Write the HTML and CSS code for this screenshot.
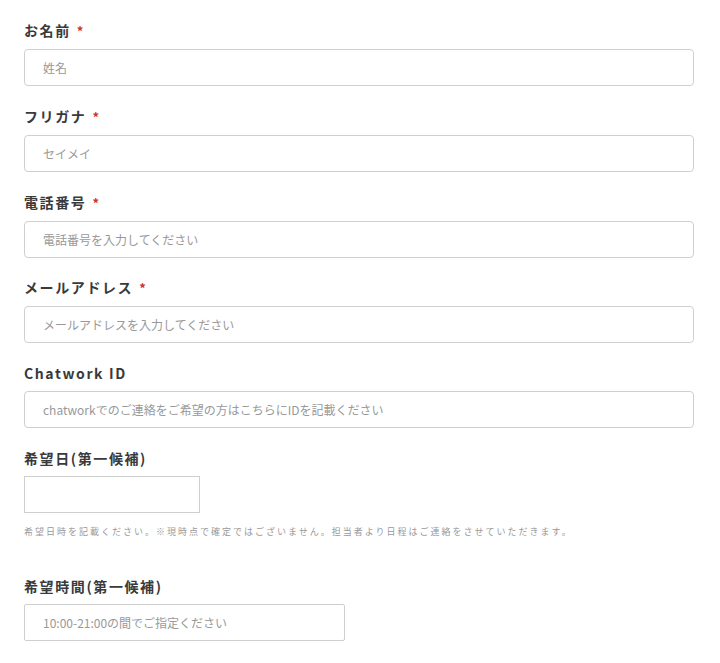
FILE: index.html
```html
<!DOCTYPE html>
<html lang="ja">
  <head>
    <meta charset="UTF-8" />
    <meta name="viewport" content="width=device-width, initial-scale=1.0" />
    <title>お問い合わせ</title>
    <link rel="stylesheet" href="styles.css">
  </head>
  <body>
    <form class="contact-form">
      <div class="field">
        <label for="name">お名前<span class="req">*</span></label>
        <input type="text" id="name" placeholder="姓名" />
      </div>
      <div class="field">
        <label for="kana">フリガナ<span class="req">*</span></label>
        <input type="text" id="kana" placeholder="セイメイ" />
      </div>
      <div class="field">
        <label for="tel">電話番号<span class="req">*</span></label>
        <input type="text" id="tel" placeholder="電話番号を入力してください" />
      </div>
      <div class="field">
        <label for="mail">メールアドレス<span class="req">*</span></label>
        <input type="text" id="mail" placeholder="メールアドレスを入力してください" />
      </div>
      <div class="field">
        <label for="chatwork">Chatwork ID</label>
        <input type="text" id="chatwork" placeholder="chatworkでのご連絡をご希望の方はこちらにIDを記載ください" />
      </div>
      <div class="field field-date">
        <label for="date">希望日(第一候補)</label>
        <input type="text" id="date" class="short" />
        <p class="note">希望日時を記載ください。※現時点で確定ではございません。担当者より日程はご連絡をさせていただきます。</p>
      </div>
      <div class="field">
        <label for="time">希望時間(第一候補)</label>
        <input type="text" id="time" class="mid" placeholder="10:00-21:00の間でご指定ください" />
      </div>
    </form>
  </body>
</html>
```

FILE: styles.css
```css
body {
  margin: 0;
  padding: 0;
  background: #fff;
  font-family: "Noto Sans CJK JP", "Liberation Sans", sans-serif;
  color: #333;
}
.contact-form {
  padding: 19px 26px 20px 24px;
}
.field {
  margin-bottom: 18.8px;
}
.field label {
  display: block;
  font-size: 14px;
  font-weight: bold;
  line-height: 22px;
  letter-spacing: 1.6px;
  color: #3a3a3a;
  margin-bottom: 7px;
}
.req {
  color: #d0312d;
  font-size: 13px;
  margin-left: 6px;
}
.field input {
  display: block;
  box-sizing: border-box;
  width: 100%;
  height: 37px;
  padding: 0 18px;
  border: 1px solid #cfcfcf;
  border-radius: 4px;
  font-family: inherit;
  font-size: 12px;
  color: #333;
  background: #fff;
  outline: none;
}
.field input::placeholder {
  color: #999;
}
.field input.short {
  width: 176px;
  border-radius: 0;
}
.field input.mid {
  width: 321px;
  border-radius: 2px;
}
.note {
  margin: 12px 0 0;
  font-size: 9px;
  line-height: 14px;
  letter-spacing: 2px;
  color: #999;
}
.field-date {
  margin-bottom: 36px;
}
```
